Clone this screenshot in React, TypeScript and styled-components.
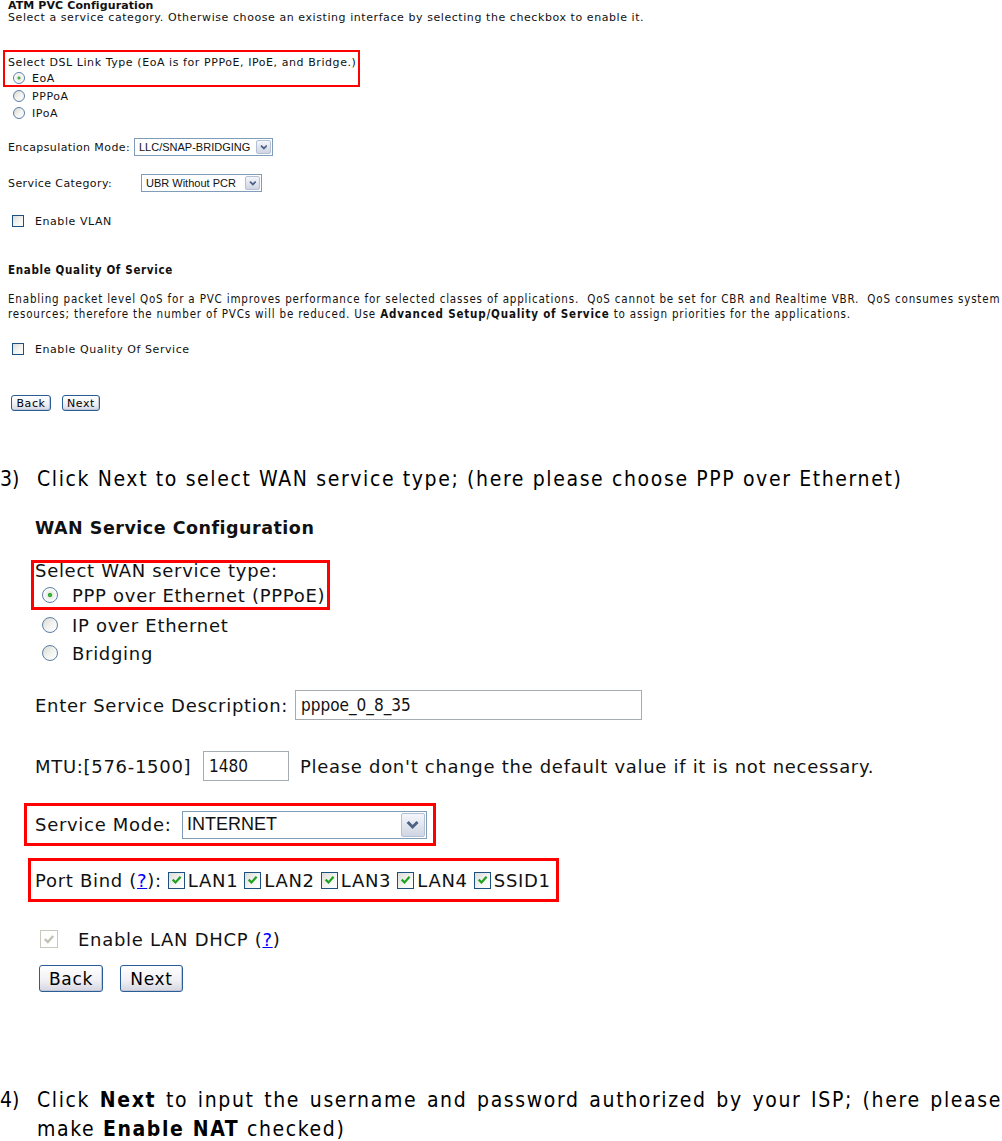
import styled, { createGlobalStyle } from 'styled-components';

const GlobalStyle = createGlobalStyle`
  html, body {
    margin: 0;
    padding: 0;
    background: #fff;
    overflow: hidden;
  }
  body {
    font-family: "DejaVu Sans", Verdana, sans-serif;
    color: #000;
  }
`;

const Page = styled.div`
  width: 1002px;
  height: 1141px;
  overflow: hidden;
  display: flex;
  flex-direction: column;
`;

/* ---------- shared small form parts ---------- */

const Radio = styled.span<{ $size: number; $checked?: boolean }>`
  flex: none;
  box-sizing: border-box;
  width: ${(p) => p.$size}px;
  height: ${(p) => p.$size}px;
  border-radius: 50%;
  border: 1px solid #5b7ea6;
  background: ${(p) =>
    p.$checked
      ? 'radial-gradient(circle, #4fd34f 0, #21a121 18%, #e8e8e4 24%, #fff 70%)'
      : 'linear-gradient(135deg, #d8d8d2 0%, #f4f4f1 55%, #fff 100%)'};
`;

const CheckBox = styled.span<{ $size: number; $checked?: boolean; $disabled?: boolean }>`
  flex: none;
  box-sizing: border-box;
  width: ${(p) => p.$size}px;
  height: ${(p) => p.$size}px;
  border: 1px solid ${(p) => (p.$disabled ? '#cac8bb' : '#1c5180')};
  background: ${(p) =>
    p.$disabled ? '#fff' : 'linear-gradient(135deg, #dcdcd7 0%, #f6f6f4 60%, #fff 100%)'};
  display: flex;
  align-items: center;
  justify-content: center;

  svg {
    width: 75%;
    height: 75%;
  }
`;

const Tick = ({ color }: { color: string }) => (
  <svg viewBox="0 0 10 10">
    <polyline points="1.5,5 4,7.5 8.5,2.5" fill="none" stroke={color} strokeWidth="2" />
  </svg>
);

const Chevron = () => (
  <svg viewBox="0 0 8 6">
    <polyline points="1,1.5 4,4.5 7,1.5" fill="none" stroke="#4d6185" strokeWidth="1.8" />
  </svg>
);

const SelectBox = styled.div<{ $w: number; $h: number; $font: number }>`
  flex: none;
  box-sizing: border-box;
  width: ${(p) => p.$w}px;
  height: ${(p) => p.$h}px;
  border: 1px solid #7f9db9;
  background: #fff;
  display: flex;
  align-items: center;
  padding: 1px;
  font-family: "Liberation Sans", Arial, sans-serif;
  font-size: ${(p) => p.$font}px;
  letter-spacing: 0;
`;

const SelectValue = styled.span`
  flex: 1;
  padding-left: 3px;
  white-space: nowrap;
  overflow: hidden;
`;

const DropButton = styled.span<{ $w: number }>`
  flex: none;
  box-sizing: border-box;
  width: ${(p) => p.$w}px;
  height: 100%;
  border: 1px solid #b4c0d4;
  border-radius: 2px;
  background: linear-gradient(#f4f6fb, #cfd5e2);
  display: flex;
  align-items: center;
  justify-content: center;

  svg {
    width: 60%;
    height: 50%;
  }
`;

const Select = ({ w, h, font, btn, value }: { w: number; h: number; font: number; btn: number; value: string }) => (
  <SelectBox $w={w} $h={h} $font={font}>
    <SelectValue>{value}</SelectValue>
    <DropButton $w={btn}>
      <Chevron />
    </DropButton>
  </SelectBox>
);

const XpButton = styled.span<{ $w: number; $h: number; $font: number }>`
  flex: none;
  box-sizing: border-box;
  width: ${(p) => p.$w}px;
  height: ${(p) => p.$h}px;
  border: 1px solid #2a5d96;
  border-radius: 3px;
  background: linear-gradient(#ffffff 0%, #f1f1f5 55%, #d6d6e2 100%);
  box-shadow: inset -1px -1px 0 #c3c6d4;
  display: flex;
  align-items: center;
  justify-content: center;
  font-size: ${(p) => p.$font}px;
  color: #000;
`;

const ButtonRow = styled.div<{ $mt: number; $indent: number; $gap: number }>`
  display: flex;
  align-items: center;
  margin-top: ${(p) => p.$mt}px;
  padding-left: ${(p) => p.$indent}px;
  gap: ${(p) => p.$gap}px;
`;

const HelpLink = styled.span`
  color: #0000ff;
  text-decoration: underline;
`;

/* ---------- first screenshot: ATM PVC ---------- */

const AtmShot = styled.section`
  display: flex;
  flex-direction: column;
  align-items: flex-start;
  padding-left: 8px;
  font-family: "DejaVu Sans", Verdana, sans-serif;
  font-size: 11px;
  letter-spacing: 0.57px;
  color: #111;
`;

const AtmTitle = styled.div`
  height: 11px;
  line-height: 11px;
  font-weight: bold;
  letter-spacing: 0.1px;
`;

const AtmLine = styled.div<{ $mt: number; $h?: number }>`
  height: ${(p) => p.$h ?? 12}px;
  line-height: ${(p) => p.$h ?? 12}px;
  margin-top: ${(p) => p.$mt}px;
  white-space: nowrap;
`;

const AtmHighlight = styled.div`
  box-sizing: border-box;
  width: 357px;
  height: 37px;
  margin: 26px 0 0 -5px;
  padding: 4px 0 0 3px;
  border: 2px solid #ff0000;
  display: flex;
  flex-direction: column;
  gap: 1px;
`;

const AtmOption = styled.div<{ $mt?: number }>`
  display: flex;
  align-items: center;
  gap: 7px;
  height: 14px;
  margin-top: ${(p) => p.$mt ?? 0}px;
  padding-left: 5px;
  white-space: nowrap;
`;

const AtmField = styled.div<{ $mt: number }>`
  display: flex;
  align-items: center;
  height: 18px;
  margin-top: ${(p) => p.$mt}px;
  white-space: nowrap;
`;

const AtmLabel = styled.span<{ $w: number }>`
  width: ${(p) => p.$w}px;
  letter-spacing: 0.4px;
`;

const AtmCheck = styled.div<{ $mt: number }>`
  display: flex;
  align-items: center;
  gap: 11px;
  height: 14px;
  margin-top: ${(p) => p.$mt}px;
  padding-left: 4px;
`;

const QosTitle = styled.div`
  height: 13px;
  line-height: 13px;
  margin-top: 36px;
  font-family: "DejaVu Sans Condensed", "DejaVu Sans", sans-serif;
  font-stretch: condensed;
  font-weight: bold;
  font-size: 11.5px;
  letter-spacing: 0.66px;
`;

const QosText = styled.p`
  margin: 15px 0 0;
  font-family: "DejaVu Sans Condensed", "DejaVu Sans", sans-serif;
  font-stretch: condensed;
  font-size: 11.5px;
  letter-spacing: 0.82px;
  line-height: 15px;
  white-space: pre;

  b {
    font-weight: bold;
  }
`;

/* ---------- step captions ---------- */

const Step = styled.div<{ $mt: number }>`
  display: flex;
  margin-top: ${(p) => p.$mt}px;
  font-family: "DejaVu Sans Condensed", "DejaVu Sans", sans-serif;
  font-stretch: condensed;
  font-size: 21px;
  letter-spacing: 1.62px;
  line-height: 31px;
`;

const StepNo = styled.span`
  flex: none;
  width: 37px;
  letter-spacing: 0;
`;

const StepText = styled.div`
  flex: 1;
  min-width: 0;

  b {
    font-weight: bold;
  }
`;

const StepLine = styled.div<{ $justify?: boolean }>`
  white-space: ${(p) => (p.$justify ? 'normal' : 'nowrap')};
  text-align: ${(p) => (p.$justify ? 'justify' : 'left')};
  text-align-last: ${(p) => (p.$justify ? 'justify' : 'left')};
`;

/* last caption line sits against the bottom edge of the page */
const StepTail = styled(StepLine)`
  padding-top: 2px;
  line-height: 22px;
`;

/* ---------- second screenshot: WAN service ---------- */

const WanShot = styled.section`
  display: flex;
  flex-direction: column;
  align-items: flex-start;
  padding-left: 35px;
  font-family: "DejaVu Sans", Verdana, sans-serif;
  font-size: 18px;
  letter-spacing: 0.7px;
  color: #111;
`;

const WanTitle = styled.div`
  height: 20px;
  line-height: 20px;
  margin-top: 23px;
  font-weight: bold;
  font-size: 17.5px;
  letter-spacing: 0.5px;
`;

const WanHighlight = styled.div<{ $mt: number; $ml: number; $w: number; $h: number; $pad: string }>`
  box-sizing: border-box;
  width: ${(p) => p.$w}px;
  height: ${(p) => p.$h}px;
  margin: ${(p) => p.$mt}px 0 0 ${(p) => p.$ml}px;
  padding: ${(p) => p.$pad};
  border: 3px solid #ff0000;
  display: flex;
  flex-direction: column;
  justify-content: center;
`;

const WanHeading = styled.div`
  height: 16px;
  line-height: 16px;
  white-space: nowrap;
`;

const WanOption = styled.div<{ $mt?: number }>`
  box-sizing: border-box;
  display: flex;
  align-items: center;
  gap: 14px;
  height: 28px;
  margin-top: ${(p) => p.$mt ?? 0}px;
  padding-left: 7px;
  white-space: nowrap;
`;

const WanBoxedOption = styled(WanOption)`
  padding-top: 4px;
`;

const WanField = styled.div<{ $mt?: number; $gap?: number }>`
  display: flex;
  align-items: center;
  gap: ${(p) => p.$gap ?? 0}px;
  margin-top: ${(p) => p.$mt ?? 0}px;
  white-space: nowrap;
`;

const WanLabel = styled.span<{ $w: number }>`
  flex: none;
  width: ${(p) => p.$w}px;
`;

const TextInput = styled.span<{ $w: number }>`
  flex: none;
  box-sizing: border-box;
  width: ${(p) => p.$w}px;
  height: 30px;
  border: 1px solid #a5acb2;
  padding-left: 5px;
  display: flex;
  align-items: center;
  font-family: "DejaVu Sans Condensed", "DejaVu Sans", sans-serif;
  font-stretch: condensed;
  font-size: 17px;
  letter-spacing: 0;
`;

const PortItem = styled.span`
  display: flex;
  align-items: center;
  gap: 3px;
  margin-left: 6px;
`;

const DhcpRow = styled.div`
  display: flex;
  align-items: center;
  gap: 20px;
  height: 20px;
  margin-top: 27px;
  padding-left: 5px;
  white-space: nowrap;
`;

const ports = ['LAN1', 'LAN2', 'LAN3', 'LAN4', 'SSID1'];

export default function App() {
  return (
    <>
      <GlobalStyle />
      <Page>
        <AtmShot>
          <AtmTitle>ATM PVC Configuration</AtmTitle>
          <AtmLine $mt={1}>
            Select a service category. Otherwise choose an existing interface by selecting the checkbox to enable it.
          </AtmLine>

          <AtmHighlight>
            <AtmLine $mt={0} $h={14}>
              Select DSL Link Type (EoA is for PPPoE, IPoE, and Bridge.)
            </AtmLine>
            <AtmOption>
              <Radio $size={12} $checked />
              EoA
            </AtmOption>
          </AtmHighlight>
          <AtmOption $mt={2}>
            <Radio $size={12} />
            PPPoA
          </AtmOption>
          <AtmOption $mt={3}>
            <Radio $size={12} />
            IPoA
          </AtmOption>

          <AtmField $mt={18}>
            <AtmLabel $w={126}>Encapsulation Mode:</AtmLabel>
            <Select w={139} h={18} font={11} btn={15} value="LLC/SNAP-BRIDGING" />
          </AtmField>
          <AtmField $mt={18}>
            <AtmLabel $w={133}>Service Category:</AtmLabel>
            <Select w={121} h={18} font={11} btn={15} value="UBR Without PCR" />
          </AtmField>

          <AtmCheck $mt={22}>
            <CheckBox $size={12} />
            Enable VLAN
          </AtmCheck>

          <QosTitle>Enable Quality Of Service</QosTitle>
          <QosText>
            {'Enabling packet level QoS for a PVC improves performance for selected classes of applications.  QoS cannot be set for CBR and Realtime VBR.  QoS consumes system'}
            <br />
            {'resources; therefore the number of PVCs will be reduced. Use '}
            <b>Advanced Setup/Quality of Service</b>
            {' to assign priorities for the applications.'}
          </QosText>

          <AtmCheck $mt={20}>
            <CheckBox $size={12} />
            Enable Quality Of Service
          </AtmCheck>

          <ButtonRow $mt={39} $indent={3} $gap={11}>
            <XpButton $w={40} $h={16} $font={11}>Back</XpButton>
            <XpButton $w={38} $h={16} $font={11}>Next</XpButton>
          </ButtonRow>
        </AtmShot>

        <Step $mt={53}>
          <StepNo>3)</StepNo>
          <StepText>
            <StepLine>Click Next to select WAN service type; (here please choose PPP over Ethernet)</StepLine>
          </StepText>
        </Step>

        <WanShot>
          <WanTitle>WAN Service Configuration</WanTitle>

          <WanHighlight $mt={22} $ml={-4} $w={299} $h={50} $pad="0 0 0 1px">
            <WanHeading>Select WAN service type:</WanHeading>
            <WanBoxedOption>
              <Radio $size={16} $checked />
              PPP over Ethernet (PPPoE)
            </WanBoxedOption>
          </WanHighlight>
          <WanOption $mt={1}>
            <Radio $size={16} />
            IP over Ethernet
          </WanOption>
          <WanOption>
            <Radio $size={16} />
            Bridging
          </WanOption>

          <WanField $mt={23}>
            <WanLabel $w={260}>Enter Service Description:</WanLabel>
            <TextInput $w={347}>pppoe_0_8_35</TextInput>
          </WanField>

          <WanField $mt={31} $gap={11}>
            <WanLabel $w={157}>MTU:[576-1500]</WanLabel>
            <TextInput $w={86}>1480</TextInput>
            <span>Please don't change the default value if it is not necessary.</span>
          </WanField>

          <WanHighlight $mt={22} $ml={-11} $w={412} $h={43} $pad="0 0 0 8px">
            <WanField>
              <WanLabel $w={147}>Service Mode:</WanLabel>
              <Select w={245} h={28} font={18} btn={24} value="INTERNET" />
            </WanField>
          </WanHighlight>

          <WanHighlight $mt={12} $ml={-7} $w={531} $h={44} $pad="0 0 0 4px">
            <WanField>
              <span>
                Port Bind (<HelpLink>?</HelpLink>):
              </span>
              {ports.map((port) => (
                <PortItem key={port}>
                  <CheckBox $size={17} $checked>
                    <Tick color="#21a121" />
                  </CheckBox>
                  {port}
                </PortItem>
              ))}
            </WanField>
          </WanHighlight>

          <DhcpRow>
            <CheckBox $size={18} $checked $disabled>
              <Tick color="#c2c1b4" />
            </CheckBox>
            <span>
              Enable LAN DHCP (<HelpLink>?</HelpLink>)
            </span>
          </DhcpRow>

          <ButtonRow $mt={16} $indent={4} $gap={17}>
            <XpButton $w={64} $h={27} $font={17}>Back</XpButton>
            <XpButton $w={63} $h={27} $font={17}>Next</XpButton>
          </ButtonRow>
        </WanShot>

        <Step $mt={93}>
          <StepNo>4)</StepNo>
          <StepText>
            <StepLine $justify>
              Click <b>Next</b> to input the username and password authorized by your ISP; (here please
            </StepLine>
            <StepTail>
              make <b>Enable NAT</b> checked)
            </StepTail>
          </StepText>
        </Step>
      </Page>
    </>
  );
}
